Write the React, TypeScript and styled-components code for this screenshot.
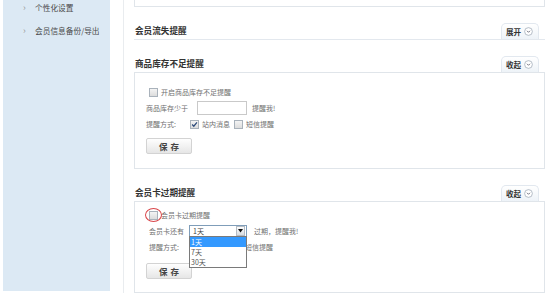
import styled, { createGlobalStyle } from "styled-components";

const GlobalStyle = createGlobalStyle`
  html, body { margin: 0; padding: 0; background: #fff; }
  body { font-family: "Noto Sans CJK SC", "Liberation Sans", sans-serif; }
`;

const Page = styled.div`
  display: flex;
  width: 558px;
  height: 293px;
  overflow: hidden;
  background: #fff;
`;

const Sidebar = styled.nav`
  width: 107px;
  height: 291px;
  margin-left: 3px;
  background: #dce9f4;
  display: flex;
  flex-direction: column;
`;

const NavList = styled.ul`
  list-style: none;
  margin: -4px 0 0;
  padding: 0;
`;

const NavItem = styled.li`
  display: flex;
  align-items: center;
  height: 23px;
  padding-left: 20px;
  font-size: 7.7px;
  color: #4a4a4a;
  white-space: nowrap;
`;

const Chevron = styled.span`
  width: 12px;
  color: #999;
  font-size: 9px;
`;

const Main = styled.main`
  margin-left: 13px;
  border-left: 1px solid #e9ecef;
  padding-left: 10px;
  width: 411px;
  display: flex;
  flex-direction: column;
`;

const TopBox = styled.div`
  height: 7px;
  border: 1px solid #e0e5ea;
  border-top: none;
`;

const Section = styled.section`
  margin-top: 15px;
  display: flex;
  flex-direction: column;
`;

const Header = styled.div<{ $line?: boolean }>`
  display: flex;
  align-items: flex-end;
  justify-content: space-between;
  height: 17px;
  border-bottom: ${(p) => (p.$line ? "1px solid #e3e8ee" : "none")};
`;

const Title = styled.h3`
  margin: 0 0 4px 1px;
  font-size: 8.6px;
  font-weight: bold;
  color: #333;
  line-height: 10px;
`;

const Toggle = styled.button`
  display: flex;
  align-items: center;
  gap: 3px;
  width: 38px;
  height: 16px;
  margin-right: 6px;
  padding: 0 0 0 4px;
  border: 1px solid #e2e8ef;
  border-bottom: none;
  border-radius: 5px 5px 0 0;
  background: linear-gradient(#ffffff, #eef3f8);
  font-family: inherit;
  font-size: 7.5px;
  font-weight: bold;
  color: #333;
`;

const Box = styled.div<{ $top: number; $bottom: number }>`
  position: relative;
  border: 1px solid #e0e5ea;
  padding: ${(p) => p.$top}px 0 ${(p) => p.$bottom}px 11px;
`;

const Row = styled.div<{ $indent?: number }>`
  display: flex;
  align-items: center;
  height: 16px;
  padding-left: ${(p) => p.$indent ?? 0}px;
  font-size: 7px;
  color: #707070;
  white-space: nowrap;
`;

const Label = styled.span<{ $w?: number }>`
  display: inline-block;
  width: ${(p) => (p.$w ? `${p.$w}px` : "auto")};
`;

const Check = styled.span<{ $gap?: number }>`
  position: relative;
  display: inline-flex;
  align-items: center;
  justify-content: center;
  width: 7px;
  height: 7px;
  margin: 0 3px 0 ${(p) => p.$gap ?? 0}px;
  border: 1px solid #a9b2bb;
  background: linear-gradient(#f4f4f4, #dcdcdc);
`;

const TextInput = styled.span`
  display: inline-block;
  width: 48px;
  height: 12px;
  border: 1px solid #c9c9c9;
  background: #fff;
  margin-right: 5px;
`;

const SelectWrap = styled.span`
  position: relative;
  display: inline-flex;
  align-items: center;
  width: 56px;
  height: 10px;
  border: 1px solid #7f9db9;
  background: #fff;
  margin-right: 7px;
  font-size: 7px;
  color: #444;
`;

const SelectText = styled.span`
  flex: 1;
  padding-left: 3px;
`;

const SelectArrow = styled.span`
  width: 7px;
  height: 8px;
  margin-right: 1px;
  display: flex;
  align-items: center;
  justify-content: center;
  border: 1px solid #b5bcc4;
  background: linear-gradient(#fdfdfd, #d8dde2);
`;

const DropList = styled.ul`
  position: absolute;
  left: -1px;
  top: 10px;
  width: 56px;
  margin: 0;
  padding: 0;
  list-style: none;
  border: 1px solid #7a7a7a;
  background: #fff;
  z-index: 3;
`;

const Option = styled.li<{ $active?: boolean }>`
  height: 10px;
  line-height: 10px;
  padding-left: 1px;
  font-size: 7px;
  color: ${(p) => (p.$active ? "#fff" : "#555")};
  background: ${(p) => (p.$active ? "#3399ff" : "#fff")};
`;

const SaveButton = styled.button<{ $mt: number }>`
  display: block;
  width: 46px;
  height: 16px;
  margin: ${(p) => p.$mt}px 0 0 0;
  padding: 0;
  border: 1px solid #d3d3d3;
  border-radius: 2px;
  background: linear-gradient(#fefefe, #e6e6e6);
  font-family: inherit;
  font-size: 8.5px;
  font-weight: bold;
  letter-spacing: 3px;
  text-indent: 3px;
  color: #444;
`;

const Annotation = styled.span`
  position: absolute;
  left: -5px;
  top: -4px;
  width: 15px;
  height: 12px;
  border: 1px solid #d9474b;
  border-radius: 50%;
`;

const CircleIcon = () => (
  <svg width="9" height="9" viewBox="0 0 10 10">
    <circle cx="5" cy="5" r="4.3" fill="#fff" stroke="#9aa6b2" strokeWidth="0.8" />
    <path d="M3.3 4.2 L5 5.9 L6.7 4.2" fill="none" stroke="#556" strokeWidth="0.9" />
  </svg>
);

const Tick = () => (
  <svg width="7" height="7" viewBox="0 0 8 8">
    <path d="M1.3 4 L3.2 6 L6.8 1.6" fill="none" stroke="#2b4a7a" strokeWidth="1.4" />
  </svg>
);

const ArrowDown = () => (
  <svg width="5" height="4" viewBox="0 0 5 4">
    <path d="M0 0 H5 L2.5 3.5 Z" fill="#111" />
  </svg>
);

const App: React.FC = () => {
  return (
    <Page>
      <GlobalStyle />
      <Sidebar>
        <NavList>
          <NavItem>
            <Chevron>›</Chevron>个性化设置
          </NavItem>
          <NavItem>
            <Chevron>›</Chevron>会员信息备份/导出
          </NavItem>
        </NavList>
      </Sidebar>
      <Main>
        <TopBox />

        <Section>
          <Header $line>
            <Title>会员流失提醒</Title>
            <Toggle>
              展开 <CircleIcon />
            </Toggle>
          </Header>
        </Section>

        <Section>
          <Header>
            <Title>商品库存不足提醒</Title>
            <Toggle>
              收起 <CircleIcon />
            </Toggle>
          </Header>
          <Box $top={11} $bottom={14}>
            <Row $indent={3}>
              <Check />
              开启商品库存不足提醒
            </Row>
            <Row>
              <Label $w={51}>商品库存少于</Label>
              <TextInput />
              提醒我!
            </Row>
            <Row>
              <Label $w={44}>提醒方式:</Label>
              <Check>
                <Tick />
              </Check>
              站内消息
              <Check $gap={4} />
              短信提醒
            </Row>
            <SaveButton $mt={6}>保存</SaveButton>
          </Box>
        </Section>

        <Section>
          <Header>
            <Title>会员卡过期提醒</Title>
            <Toggle>
              收起 <CircleIcon />
            </Toggle>
          </Header>
          <Box $top={5} $bottom={13}>
            <Row $indent={3}>
              <Check>
                <Annotation />
              </Check>
              会员卡过期提醒
            </Row>
            <Row $indent={3}>
              <Label $w={40}>会员卡还有</Label>
              <SelectWrap>
                <SelectText>1天</SelectText>
                <SelectArrow>
                  <ArrowDown />
                </SelectArrow>
                <DropList>
                  <Option $active>1天</Option>
                  <Option>7天</Option>
                  <Option>30天</Option>
                </DropList>
              </SelectWrap>
              过期，提醒我!
            </Row>
            <Row $indent={3}>
              <Label $w={40}>提醒方式:</Label>
              <Check>
                <Tick />
              </Check>
              站内消息
              <Check $gap={4} />
              短信提醒
            </Row>
            <SaveButton $mt={8}>保存</SaveButton>
          </Box>
        </Section>
      </Main>
    </Page>
  );
};

export default App;
